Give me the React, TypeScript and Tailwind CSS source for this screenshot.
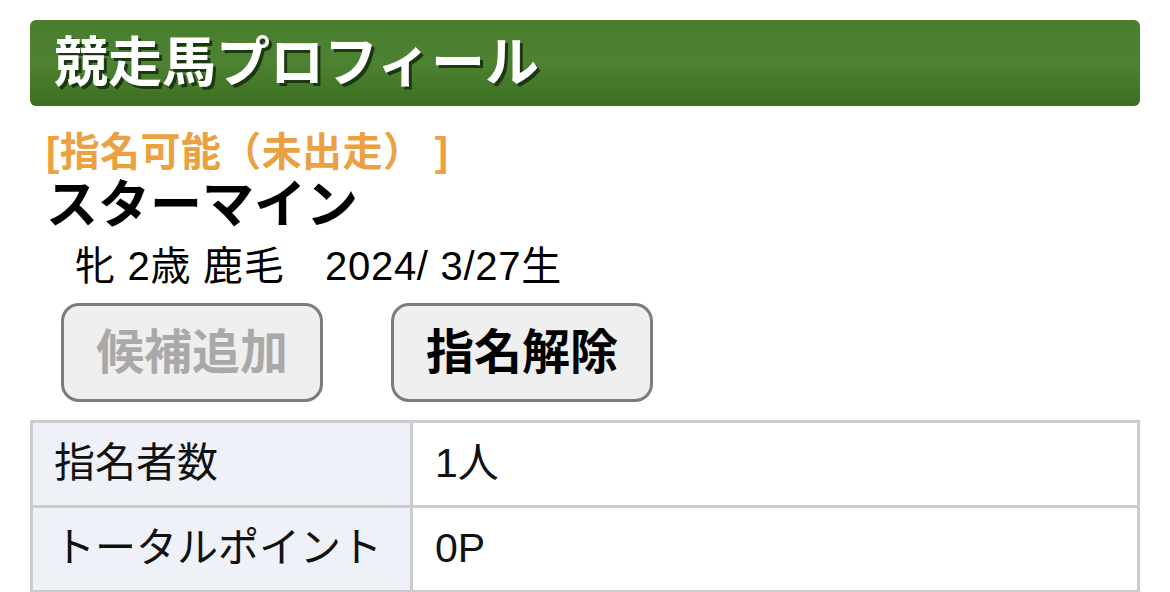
export default function App() {
  const font = "font-['Liberation_Sans','Noto_Sans_CJK_JP',sans-serif]"
  return (
    <div className={`min-h-screen bg-white px-[30px] pt-[20px] ${font}`}>
      <div className="flex h-[86px] items-center rounded-[6px] bg-gradient-to-b from-[#4a7e2f] via-[#4d8232] to-[#3c7020] pl-[24px]">
        <h1 className="text-[54px] font-bold leading-none text-white [text-shadow:3px_3px_0_#1c3810]">
          競走馬プロフィール
        </h1>
      </div>

      <p className="mt-[26px] pl-[16px] text-[40px] font-bold leading-none tracking-[0.4px] text-[#eba13f]">
        [指名可能（未出走） ]
      </p>
      <h2 className="mt-[7px] pl-[16px] text-[52px] font-bold leading-none text-black">スターマイン</h2>
      <p className="mt-[15px] pl-[45px] text-[40px] leading-none tracking-[0.7px] text-black">
        牝 2歳 鹿毛　2024/ 3/27生
      </p>

      <div className="mt-[17px] flex gap-[68px] pl-[31px]">
        <button
          type="button"
          disabled
          className="h-[99px] w-[262px] rounded-[18px] border-[3px] border-[#7c7c7c] bg-[#efefef] text-[48px] font-bold text-[#a9a9a9]"
        >
          候補追加
        </button>
        <button
          type="button"
          className="h-[99px] w-[262px] rounded-[18px] border-[3px] border-[#7c7c7c] bg-[#efefef] text-[48px] font-bold text-black"
        >
          指名解除
        </button>
      </div>

      <table className="mt-[18px] w-full border-collapse text-[41px] text-[#111]">
        <tbody>
          <tr className="h-[85px]">
            <td className="w-[380px] border-[3px] border-[#cccccc] bg-[#eef1f8] pl-[21px]">指名者数</td>
            <td className="border-[3px] border-[#cccccc] pl-[22px]">1人</td>
          </tr>
          <tr className="h-[85px]">
            <td className="w-[380px] border-[3px] border-[#cccccc] bg-[#eef1f8] pl-[21px]">トータルポイント</td>
            <td className="border-[3px] border-[#cccccc] pl-[22px]">0P</td>
          </tr>
        </tbody>
      </table>
    </div>
  )
}
